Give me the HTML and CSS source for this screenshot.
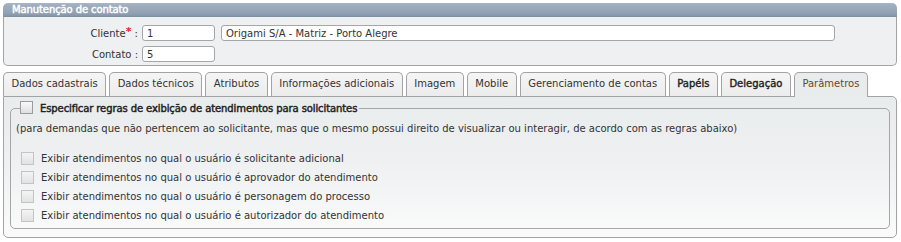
FILE: index.html
```html
<!DOCTYPE html>
<html lang="pt-BR">
<head>
<meta charset="utf-8">
<title>Manutenção de contato</title>
<link rel="stylesheet" href="styles.css">
</head>
<body>
<div class="page">
  <section class="box">
    <div class="box-title">Manutenção de contato</div>
    <div class="box-body">
      <div class="form-row">
        <label class="lbl">Cliente<span class="req">*</span> :</label>
        <input class="field short" type="text" value="1">
        <input class="field long" type="text" value="Origami S/A - Matriz - Porto Alegre">
      </div>
      <div class="form-row">
        <label class="lbl">Contato :</label>
        <input class="field short" type="text" value="5">
      </div>
    </div>
  </section>

  <div class="tabs">
    <ul class="tab-list">
      <li class="tab">Dados cadastrais</li>
      <li class="tab">Dados técnicos</li>
      <li class="tab">Atributos</li>
      <li class="tab">Informações adicionais</li>
      <li class="tab">Imagem</li>
      <li class="tab">Mobile</li>
      <li class="tab">Gerenciamento de contas</li>
      <li class="tab strong">Papéis</li>
      <li class="tab strong">Delegação</li>
      <li class="tab active">Parâmetros</li>
    </ul>
    <div class="tab-panel">
      <fieldset class="group">
        <legend class="group-legend"><span class="cb cb-dark"></span><span class="legend-text">Especificar regras de exibição de atendimentos para solicitantes</span></legend>
        <p class="note">(para demandas que não pertencem ao solicitante, mas que o mesmo possui direito de visualizar ou interagir, de acordo com as regras abaixo)</p>
        <ul class="opts">
          <li class="opt"><span class="cb"></span>Exibir atendimentos no qual o usuário é solicitante adicional</li>
          <li class="opt"><span class="cb"></span>Exibir atendimentos no qual o usuário é aprovador do atendimento</li>
          <li class="opt"><span class="cb"></span>Exibir atendimentos no qual o usuário é personagem do processo</li>
          <li class="opt"><span class="cb"></span>Exibir atendimentos no qual o usuário é autorizador do atendimento</li>
        </ul>
      </fieldset>
    </div>
  </div>
</div>
</body>
</html>
```

FILE: styles.css
```css
* { box-sizing: border-box; }

html, body {
  margin: 0;
  padding: 0;
  background: #ffffff;
}

body {
  font-family: "DejaVu Sans", Verdana, sans-serif;
  font-size: 10px;
  color: #333333;
}

.page {
  padding: 3px 4px 0 3px;
}

/* ---------- header box ---------- */
.box-title {
  height: 14px;
  line-height: 14px;
  padding-left: 9px;
  color: #ffffff;
  font-size: 10px;
  -webkit-text-stroke: 0.45px #ffffff;
  letter-spacing: -0.1px;
  border-radius: 5px 5px 0 0;
  background: linear-gradient(#a8b6c5 0, #a0afbf 2px, #93a4b6 9px, #8a9bae 12px, #7b8da1 14px);
}

.box-body {
  background: #eef0f1;
  border: 1px solid #a3a3a3;
  border-top: none;
  border-radius: 0 0 5px 5px;
  padding: 8px 0 3px 0;
  display: flex;
  flex-direction: column;
  gap: 5px;
}

.form-row {
  display: flex;
  align-items: center;
  gap: 6px;
}

.lbl {
  width: 134px;
  margin-right: -2px;
  text-align: right;
  color: #333333;
  font-size: 10px;
}

.req {
  color: #e0202a;
  font-weight: bold;
  font-size: 11px;
  vertical-align: 2px;
  line-height: 0;
}

.field {
  height: 16px;
  margin: 0;
  padding: 0 0 0 4px;
  border: 1px solid #a6a6a6;
  border-radius: 3px;
  background: #ffffff;
  font-family: "DejaVu Sans", Verdana, sans-serif;
  font-size: 10px;
  color: #333333;
  outline: none;
}

.field.short { width: 73px; }
.field.long { width: 614px; }

/* ---------- tabs ---------- */
.tabs {
  margin-top: 6px;
}

.tab-list {
  list-style: none;
  margin: 0;
  padding: 0;
  display: flex;
  gap: 3px;
  align-items: flex-end;
}

.tab {
  height: 24px;
  line-height: 22px;
  padding: 0 7.5px;
  border: 1px solid #a3a3a3;
  border-bottom: none;
  border-radius: 5px 5px 0 0;
  background: linear-gradient(#f5f5f5, #ececec);
  color: #333333;
  white-space: nowrap;
}

.tab.strong {
  color: #222222;
  -webkit-text-stroke: 0.4px #222222;
}

.tab.active {
  height: 25px;
  margin-bottom: -1px;
  background: #e9eced;
  color: #654a28;
  position: relative;
  z-index: 1;
}

.tab-panel {
  border: 1px solid #a3a3a3;
  border-radius: 0 5px 5px 5px;
  background: linear-gradient(#e9eced 0%, #eef0f1 45%, #fbfbfb 100%);
  padding: 6px 6px 8px 6px;
}

/* ---------- fieldset ---------- */
.group {
  margin: 0;
  border: 1px solid #a6a6a6;
  border-radius: 5px;
  padding: 0 5px 3px 5px;
}

.group-legend {
  margin-left: 4px;
  padding: 0 2px 0 0;
  display: flex;
  align-items: center;
  gap: 7px;
}

.group-legend .cb {
  margin-top: -3px;
}

.legend-text {
  color: #222222;
  -webkit-text-stroke: 0.45px #222222;
  letter-spacing: -0.1px;
}

.cb {
  display: inline-block;
  width: 13px;
  height: 13px;
  border: 1px solid #c4c4c4;
  background: linear-gradient(#f4f4f4, #e2e2e2);
  flex: none;
}

.cb-dark {
  border-color: #9c9c9c;
  background: linear-gradient(#fafafa, #dedede);
}

.note {
  margin: 8px 0 0 0;
  line-height: 14px;
}

.opts {
  list-style: none;
  margin: 13px 0 0 0;
  padding: 0;
  display: flex;
  flex-direction: column;
}

.opt {
  height: 19px;
  display: flex;
  align-items: center;
  gap: 7px;
  padding-left: 5px;
}
```
